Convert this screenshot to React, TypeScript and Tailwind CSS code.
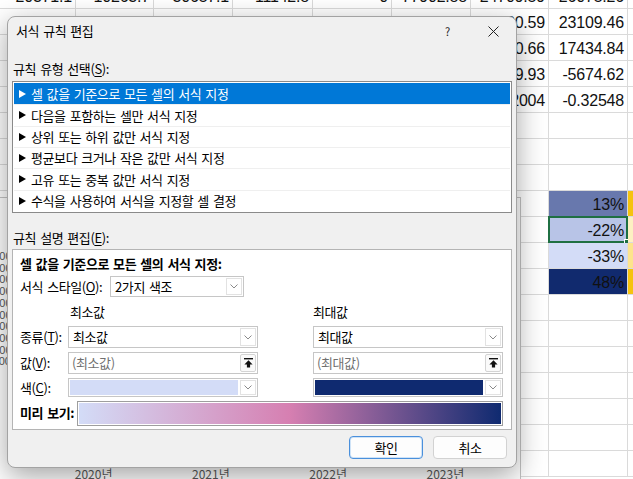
import React from "react";
import clsx from "clsx";

type Cell = { t?: string; bg?: string; sel?: boolean };

// sheet behind the dialog: 19 rows x 9 columns
const sheet: Cell[][] = Array.from({ length: 19 }, () =>
  Array.from({ length: 9 }, () => ({}))
);

const top = ["20371.1", "10263.7", "30657.1", "11142.8", "0", "77902.88", "24709.59", "26075.26"];
top.forEach((t, i) => (sheet[0][i] = { t }));
const right: [string, string][] = [
  ["17520.59", "23109.46"],
  ["21430.66", "17434.84"],
  ["-2519.93", "-5674.62"],
  ["0.52004", "-0.32548"],
];
right.forEach(([a, b], i) => {
  sheet[i + 1][6] = { t: a };
  sheet[i + 1][7] = { t: b };
});
sheet[8][7] = { t: "13%", bg: "bg-[#6878ad]" };
sheet[9][7] = { t: "-22%", bg: "bg-[#b8c4e7]", sel: true };
sheet[10][7] = { t: "-33%", bg: "bg-[#d3dcf7]" };
sheet[11][7] = { t: "48%", bg: "bg-[#112a6e]" };
sheet[8][8] = { bg: "bg-[#f5c30f]" };
sheet[9][8] = { bg: "bg-[#fdf1c2]" };
sheet[10][8] = { bg: "bg-[#fde48c]" };
sheet[11][8] = { bg: "bg-[#f5c30f]" };

const axis = ["50000", "45000", "40000", "35000", "30000", "25000", "20000", "15000", "10000", "5000"];
const years = ["2020년", "2021년", "2022년", "2023년"];

const rules = [
  "셀 값을 기준으로 모든 셀의 서식 지정",
  "다음을 포함하는 셀만 서식 지정",
  "상위 또는 하위 값만 서식 지정",
  "평균보다 크거나 작은 값만 서식 지정",
  "고유 또는 중복 값만 서식 지정",
  "수식을 사용하여 서식을 지정할 셀 결정",
];

const Chevron = () => (
  <svg width="8" height="5" viewBox="0 0 8 5">
    <path d="M0.5 0.5 L4 4 L7.5 0.5" fill="none" stroke="#8a8a8a" strokeWidth="1" />
  </svg>
);

const Arrow = () => (
  <svg width="7" height="8" viewBox="0 0 7 8" className="shrink-0">
    <polygon points="0,0 7,4 0,8" fill="currentColor" />
  </svg>
);

const CollapseIcon = () => (
  <svg width="9" height="10" viewBox="0 0 9 10">
    <rect x="0" y="0" width="9" height="1.4" fill="#111" />
    <path d="M4.5 2.2 L8.6 6.4 H6.1 V9.6 H2.9 V6.4 H0.4 Z" fill="#111" />
  </svg>
);

function DropBtn() {
  return (
    <div className="m-px flex w-[16px] items-center justify-center border border-[#e2e2e2] bg-white">
      <Chevron />
    </div>
  );
}

function Combo({ className, children }: { className: string; children: React.ReactNode }) {
  return (
    <div className={clsx("flex border border-[#c6c6c6] bg-white", className)}>
      <div className="flex flex-1 items-center pl-[4px]">{children}</div>
      <DropBtn />
    </div>
  );
}

function ColorCombo({ fill }: { fill: string }) {
  return (
    <div className="flex h-[19px] w-[190px] border border-[#c6c6c6] bg-white">
      <div className={clsx("m-px flex-1", fill)} />
      <DropBtn />
    </div>
  );
}

function ValueBox({ text }: { text: string }) {
  return (
    <div className="flex h-[22px] w-[190px] border border-[#c6c6c6] bg-white">
      <div className="flex flex-1 items-center pl-[3px] text-[#707070]">{text}</div>
      <div className="m-px flex w-[16px] items-center justify-center rounded-[2px] border border-[#d4d4d4] bg-[#fafafa]">
        <CollapseIcon />
      </div>
    </div>
  );
}

function Mn({ k }: { k: string }) {
  return (
    <>
      (<span className="underline underline-offset-2">{k}</span>):
    </>
  );
}

export default function App() {
  return (
    <div className="relative h-[479px] w-[633px] overflow-hidden bg-white font-['Noto_Sans_CJK_KR','Noto_Sans',sans-serif]">
      {/* worksheet */}
      <div className="-mt-[17px] grid auto-rows-[26px] grid-cols-[76px_78px_79px_80px_79px_79px_78px_79px_40px] font-['Liberation_Sans',Arial,sans-serif] text-[16px] tracking-[-0.2px] text-[#111]">
        {sheet.flat().map((c, i) => (
          <div
            key={i}
            className={clsx(
              "relative border-r border-b border-[#dadada] pr-[3px] text-right leading-[27px]",
              c.bg
            )}
          >
            {c.t}
            {c.sel && (
              <>
                <div className="absolute -top-px -left-px -right-px -bottom-px border-2 border-[#1e6f42]" />
                <div className="absolute -right-[3px] -bottom-[3px] h-[6px] w-[6px] border border-white bg-[#1e6f42]" />
              </>
            )}
          </div>
        ))}
      </div>

      {/* chart object behind the dialog */}
      <div className="absolute left-[-20px] top-[197px] h-[300px] w-[541px] border border-[#c4c4c4] bg-white font-['Liberation_Sans',Arial,sans-serif] text-[11px] text-[#595959]">
        <div className="mt-[53px] flex w-[30px] flex-col text-right leading-[11.7px]">
          {axis.map((a) => (
            <span key={a}>{a}</span>
          ))}
        </div>
        <div className="mt-[98px] grid w-[523px] grid-cols-4 pl-[54px] text-center font-['Noto_Sans_CJK_KR',sans-serif] text-[12px] leading-[16px]">
          {years.map((y) => (
            <span key={y}>{y}</span>
          ))}
        </div>
      </div>

      {/* dialog */}
      <div className="absolute left-[7px] top-[16px] z-10 flex h-[452px] w-[510px] flex-col rounded-[8px] border border-[#a3a3a3] bg-[#f0f0f0] text-[13px] tracking-[-0.4px] text-black shadow-[0_8px_28px_rgba(0,0,0,0.36)] [word-spacing:1.5px]">
        <div className="flex h-[28px] items-center">
          <span className="pl-[8px]">서식 규칙 편집</span>
          <div className="ml-auto flex h-full">
            <div className="flex w-[45px] items-center justify-center text-[11px] text-[#222]">?</div>
            <div className="flex w-[46px] items-center justify-center">
              <svg width="11" height="11" viewBox="0 0 11 11">
                <path d="M0.5 0.5 L10.5 10.5 M10.5 0.5 L0.5 10.5" stroke="#222" strokeWidth="1" />
              </svg>
            </div>
          </div>
        </div>

        <div className="flex flex-1 flex-col px-[4px]">
          <div className="mt-[16px] pl-px leading-[16px]">
            규칙 유형 선택<Mn k="S" />
          </div>
          <div className="mt-[4px] flex h-[132px] flex-col border border-[#8a8a8a] bg-white p-px">
            {rules.map((r, i) => (
              <div
                key={r}
                className={clsx(
                  "flex h-[21.33px] items-center gap-[5px] pl-[5px]",
                  i === 0 ? "bg-[#0078d7] text-white" : "border-t border-[#efefef] text-black"
                )}
              >
                <Arrow />
                <span>{r}</span>
              </div>
            ))}
          </div>

          <div className="mt-[17px] pl-px leading-[16px]">
            규칙 설명 편집<Mn k="E" />
          </div>
          <div className="mt-[3px] flex h-[181px] flex-col border border-[#b4b4b4] bg-white pl-[7px] pt-[6px]">
            <div className="font-bold leading-[16px]">셀 값을 기준으로 모든 셀의 서식 지정:</div>
            <div className="mt-[4px] flex items-center">
              <span className="w-[90px]">
                서식 스타일<Mn k="O" />
              </span>
              <Combo className="h-[21px] w-[134px]">2가지 색조</Combo>
            </div>
            <div className="mt-[7px] flex leading-[16px]">
              <span className="ml-[50px] w-[243px]">최소값</span>
              <span>최대값</span>
            </div>
            <div className="mt-[6px] grid grid-cols-[48px_190px_190px] items-center">
              <span>
                종류<Mn k="T" />
              </span>
              <Combo className="h-[22px] w-[190px]">최소값</Combo>
              <Combo className="ml-[55px] h-[22px] w-[190px]">최대값</Combo>
            </div>
            <div className="mt-[4px] grid grid-cols-[48px_190px_245px] items-center">
              <span>
                값<Mn k="V" />
              </span>
              <ValueBox text="(최소값)" />
              <div className="ml-[55px]">
                <ValueBox text="(최대값)" />
              </div>
            </div>
            <div className="mt-[4px] grid grid-cols-[48px_190px_245px] items-center">
              <span>
                색<Mn k="C" />
              </span>
              <ColorCombo fill="bg-[#d3dcf7]" />
              <div className="ml-[55px]">
                <ColorCombo fill="bg-[#0f2a70]" />
              </div>
            </div>
            <div className="mt-[3px] flex items-center">
              <span className="w-[57px] font-bold">미리 보기:</span>
              <div className="h-[25px] w-[426px] border border-[#9e9e9e] p-px">
                <div className="h-full w-full bg-[linear-gradient(to_right,#d3dcf7_0%,#d67fb1_50%,#0f2a70_100%)]" />
              </div>
            </div>
          </div>

          <div className="mt-[6px] flex justify-end gap-[10px] pr-[5px]">
            <button className="h-[23px] w-[74px] rounded-[4px] border border-[#4a90dc] bg-[#fdfdfd] shadow-[inset_0_0_0_1px_#cfe3f7]">
              확인
            </button>
            <button className="h-[23px] w-[74px] rounded-[4px] border border-[#d2d2d2] bg-[#fdfdfd]">
              취소
            </button>
          </div>
        </div>
      </div>
    </div>
  );
}
